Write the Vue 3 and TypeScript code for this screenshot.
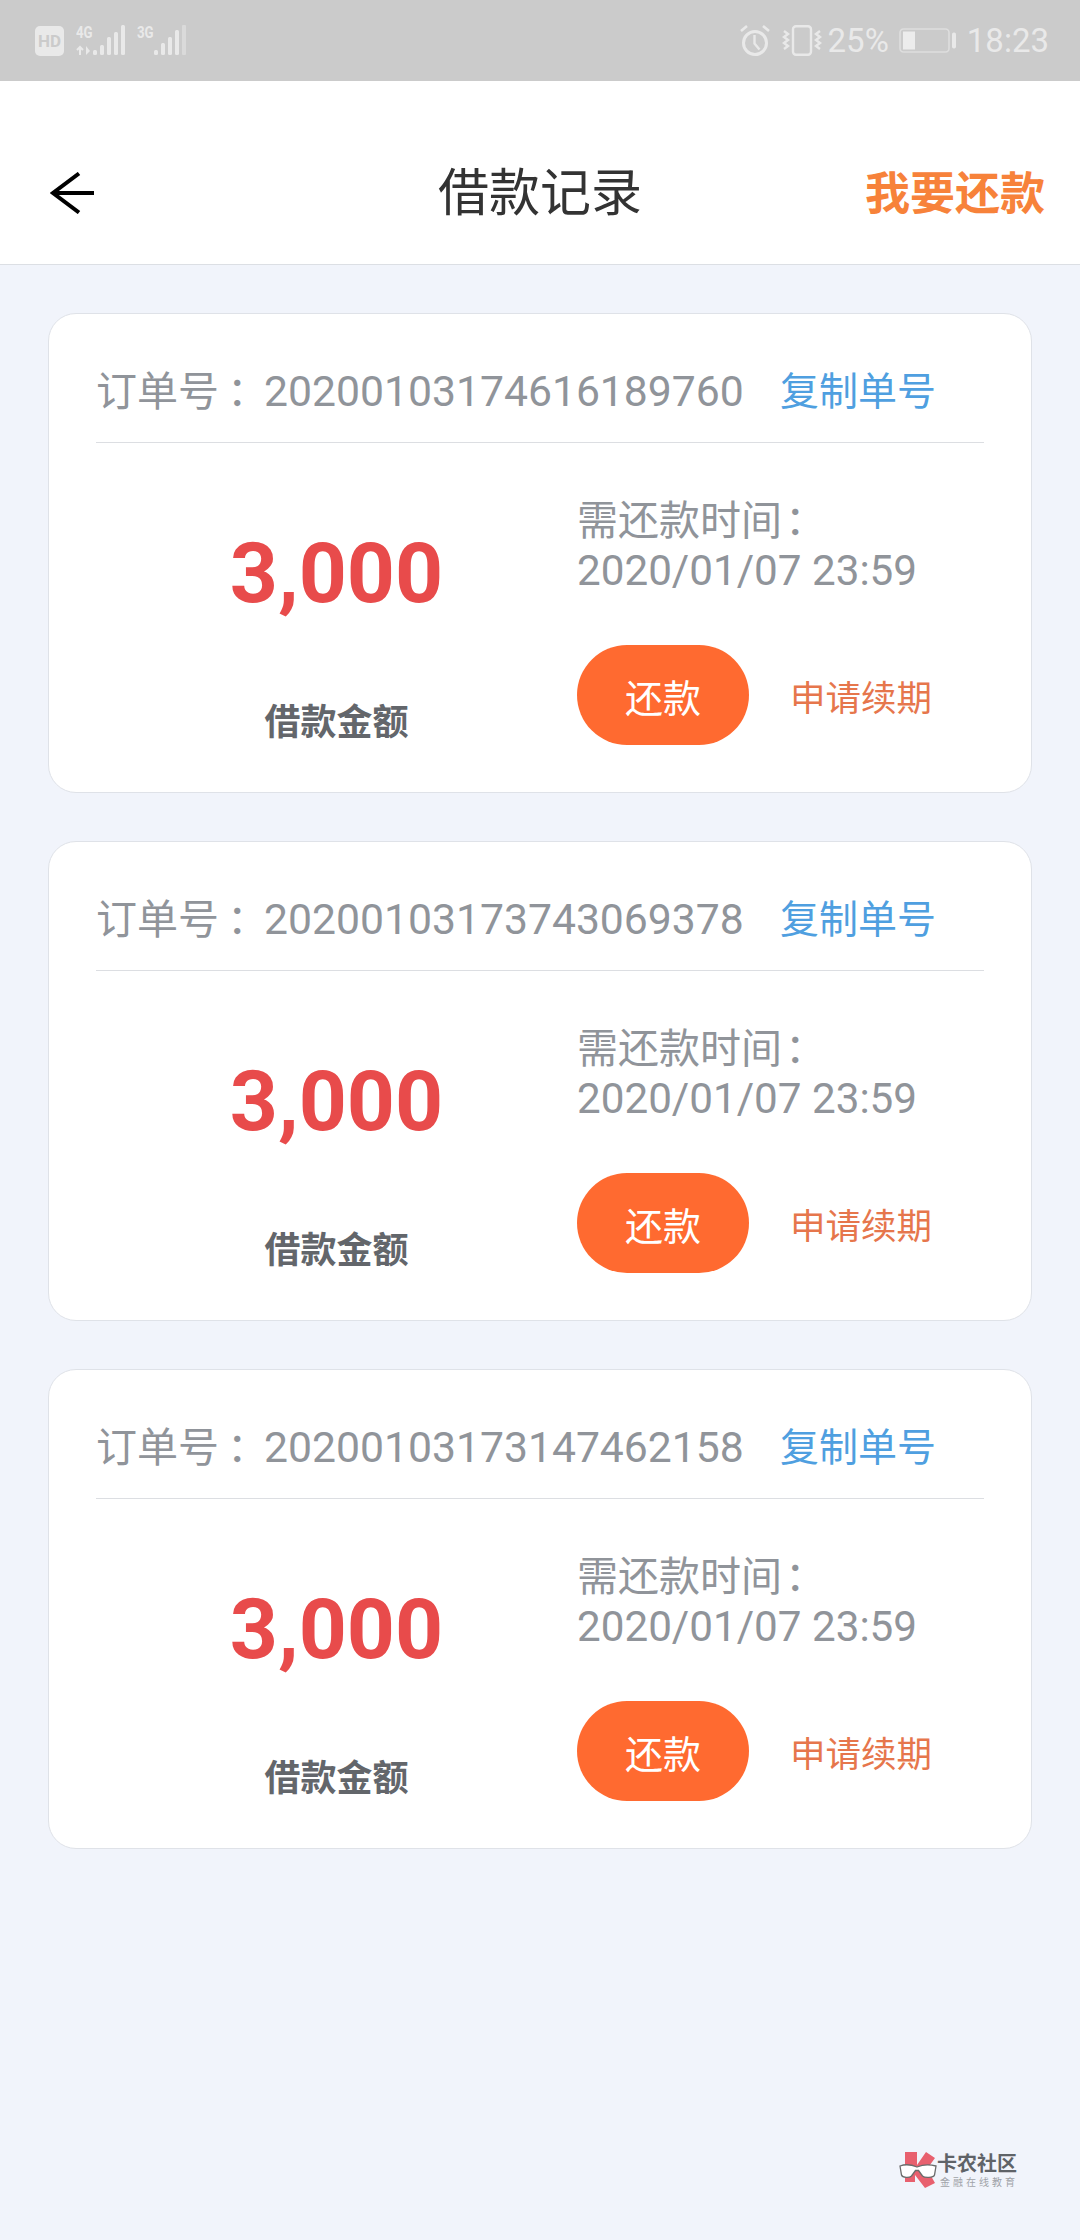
<template>
  <div class="page">
    <div class="status-bar">
      <div class="status-left">
        <span class="hd">HD</span>
        <div class="net">
          <span class="net-label">4G</span>
          <svg width="50" height="31" viewBox="0 0 50 31" fill="#e9e9e9">
            <path d="M4 30V22M1 25l3-3 3 3" stroke="#e9e9e9" stroke-width="2" fill="none" />
            <path d="M10 21v9l4-4z" />
            <rect x="17" y="25" width="4" height="5" rx="1.5" />
            <rect x="24" y="20" width="4" height="10" rx="1.5" />
            <rect x="31" y="12" width="4" height="18" rx="1.5" />
            <rect x="38" y="7" width="4" height="23" rx="1.5" />
            <rect x="45" y="0" width="4" height="30" rx="1.5" />
          </svg>
        </div>
        <div class="net net3">
          <span class="net-label">3G</span>
          <svg width="49" height="31" viewBox="0 0 49 31" fill="#e9e9e9">
            <rect x="17" y="25" width="4" height="5" rx="1.5" />
            <rect x="24" y="18" width="4" height="12" rx="1.5" />
            <rect x="31" y="12" width="4" height="18" rx="1.5" />
            <rect x="38" y="5" width="4" height="25" rx="1.5" />
            <rect x="45" y="0" width="4" height="30" rx="1" fill="#dadada" />
          </svg>
        </div>
      </div>
      <div class="status-right">
        <svg width="30" height="31" viewBox="0 0 30 31" fill="none" stroke="#e9e9e9">
          <circle cx="15" cy="18" r="11.5" stroke-width="3" />
          <path d="M14.5 10v8.5l5 6" stroke-width="2.4" />
          <path d="M1 6l6-5M29 6l-6-5" stroke-width="2.6" />
        </svg>
        <svg class="vibrate" width="40" height="31" viewBox="0 0 40 31" fill="none" stroke="#e9e9e9">
          <rect x="11" y="1.2" width="18" height="28.6" rx="3" stroke-width="2.4" />
          <path d="M2 6l4 3-4 3 4 3-4 3 4 3-4 3" stroke-width="2.4" />
          <path d="M38 6l-4 3 4 3-4 3 4 3-4 3 4 3" stroke-width="2.4" />
        </svg>
        <span class="pct">25%</span>
        <svg class="battery" width="57" height="25" viewBox="0 0 57 25" fill="none">
          <rect x="1" y="1" width="49" height="23" rx="3.5" stroke="#dedede" stroke-width="1.6" />
          <rect x="4" y="3.5" width="12" height="18" fill="#ececec" />
          <rect x="53" y="4.5" width="4" height="16" rx="1.8" fill="#e9e9e9" />
        </svg>
        <span class="clock">18:23</span>
      </div>
    </div>

    <header class="nav">
      <div class="nav-side">
        <svg width="44" height="42" viewBox="0 0 44 42" fill="none" stroke="#000" stroke-width="4">
          <path d="M44 21H3" />
          <path d="M29 1.5L3 21l26 19.5" />
        </svg>
      </div>
      <h1 class="title">借款记录</h1>
      <div class="nav-side nav-action">我要还款</div>
    </header>

    <main class="list">
      <section v-for="item in records" :key="item.orderNo" class="card">
        <div class="card-head">
          <span class="order">订单号<span class="colon">：</span><span class="order-no">{{ item.orderNo }}</span></span>
          <span class="copy">复制单号</span>
        </div>
        <div class="card-body">
          <div class="amount-col">
            <div class="amount">{{ item.amount }}</div>
            <div class="amount-label">借款金额</div>
          </div>
          <div class="info-col">
            <div class="due">需还款时间<span class="due-colon">：</span><br /><span class="due-date">{{ item.due }}</span></div>
            <div class="actions">
              <button class="repay">还款</button>
              <span class="renew">申请续期</span>
            </div>
          </div>
        </div>
      </section>
    </main>

    <div class="watermark">
      <svg width="38" height="36" viewBox="0 0 38 36">
        <path d="M6 0h12v13L27 0l9 6-8 11 8 14-10 5-10-13v7H6z" fill="#e8606e" />
        <path d="M1 14c4-1.500 11-1.500 17 1 6-2.500 13-2.500 19-1l-1.500 9c-1 3-10 3-12 1l-4-5.500h-3l-4 5.500c-2 2-9 2-10-1z" fill="#fff" stroke="#6b6b6b" stroke-width="1.300" />
      </svg>
      <div class="wm-text">
        <div class="wm-name">卡农社区</div>
        <div class="wm-sub">金融在线教育</div>
      </div>
    </div>
  </div>
</template>

<script setup lang="ts">
interface LoanRecord {
  orderNo: string;
  amount: string;
  due: string;
}

const records: LoanRecord[] = [
  { orderNo: '20200103174616189760', amount: '3,000', due: '2020/01/07 23:59' },
  { orderNo: '20200103173743069378', amount: '3,000', due: '2020/01/07 23:59' },
  { orderNo: '20200103173147462158', amount: '3,000', due: '2020/01/07 23:59' },
];
</script>

<style>
html,
body {
  margin: 0;
  background: #f1f4fb;
}
</style>

<style scoped>
.page {
  position: relative;
  width: 1080px;
  height: 2240px;
  background: #f1f4fb;
  font-family: Roboto, "Noto Sans CJK SC", sans-serif;
  overflow: hidden;
}
.status-bar {
  height: 81px;
  box-sizing: border-box;
  background: #cbcbcb;
  display: flex;
  justify-content: space-between;
  align-items: center;
  padding: 0 31px 0 35px;
  color: #e9e9e9;
}
.status-left,
.status-right {
  display: flex;
  align-items: center;
}
.hd {
  width: 29px;
  height: 30px;
  background: #e9e9e9;
  color: #cbcbcb;
  border-radius: 5px;
  font-size: 17px;
  font-weight: 700;
  line-height: 30px;
  text-align: center;
}
.net {
  position: relative;
  width: 50px;
  height: 31px;
  margin-left: 12px;
}
.net3 {
  width: 49px;
  margin-left: 11px;
}
.net-label {
  position: absolute;
  left: 0;
  top: 0;
  font-size: 17px;
  line-height: 14px;
  font-weight: 700;
  transform: scaleX(0.78);
  transform-origin: left top;
}
.net svg {
  display: block;
}
.vibrate {
  margin-left: 12px;
}
.pct {
  font-size: 33px;
  margin-left: 6px;
}
.battery {
  margin-left: 10px;
}
.clock {
  font-size: 33px;
  margin-left: 11px;
}
.nav {
  height: 143px;
  background: #fff;
  border-bottom: 1px solid #dcdfe4;
  display: grid;
  grid-template-columns: 1fr auto 1fr;
  align-items: center;
  padding: 40px 35px 0 50px;
}
.nav-side {
  display: flex;
  align-items: center;
}
.title {
  margin: 3px 0 0 -15px;
  font-size: 51px;
  font-weight: 400;
  color: #333;
  line-height: 60px;
}
.nav-action {
  justify-content: flex-end;
  margin-bottom: 4px;
  font-size: 45px;
  font-weight: 700;
  color: #f7823a;
}
.list {
  padding: 48px 48px 0;
  display: flex;
  flex-direction: column;
  gap: 48px;
}
.card {
  height: 480px;
  box-sizing: border-box;
  background: #fff;
  border: 1px solid #dfe2e8;
  border-radius: 28px;
  padding: 0 47px;
}
.card-head {
  height: 129px;
  box-sizing: border-box;
  border-bottom: 1px solid #dcdee2;
  display: flex;
  justify-content: space-between;
  align-items: center;
  padding: 20px 48px 0 0;
}
.order {
  font-size: 41px;
  color: #90949a;
  white-space: nowrap;
}
.colon {
  margin: 0 -4px 0 8px;
}
.order-no {
  font-size: 42.7px;
}
.copy {
  font-size: 39px;
  color: #4f9fe0;
}
.card-body {
  display: flex;
}
.amount-col {
  width: 481px;
  box-sizing: border-box;
  text-align: center;
}
.amount {
  margin-top: 81px;
  font-size: 84px;
  line-height: 100px;
  font-weight: 700;
  color: #e84b4b;
}
.amount-label {
  margin-top: 74px;
  font-size: 36px;
  line-height: 50px;
  font-weight: 700;
  color: #63666b;
}
.info-col {
  padding-top: 54px;
}
.due {
  font-size: 41px;
  line-height: 49px;
  color: #90949a;
}
.due-colon {
  margin-left: 3px;
}
.due-date {
  font-size: 42.2px;
}
.actions {
  display: flex;
  align-items: center;
  margin-top: 49px;
}
.repay {
  width: 172px;
  height: 100px;
  border: 0;
  border-radius: 50px;
  background: #ff6a30;
  color: #fff;
  font-family: inherit;
  font-size: 38px;
  padding: 0;
}
.renew {
  margin-left: 41px;
  font-size: 35.5px;
  color: #e6764c;
}
.watermark {
  position: absolute;
  left: 899px;
  top: 2152px;
  display: flex;
  align-items: flex-start;
  gap: 0;
}
.wm-name {
  font-size: 20px;
  line-height: 24px;
  font-weight: 700;
  color: #5f6368;
}
.wm-sub {
  margin-left: 3px;
  font-size: 10px;
  line-height: 13px;
  letter-spacing: 3px;
  color: #a0a3a8;
}
</style>
